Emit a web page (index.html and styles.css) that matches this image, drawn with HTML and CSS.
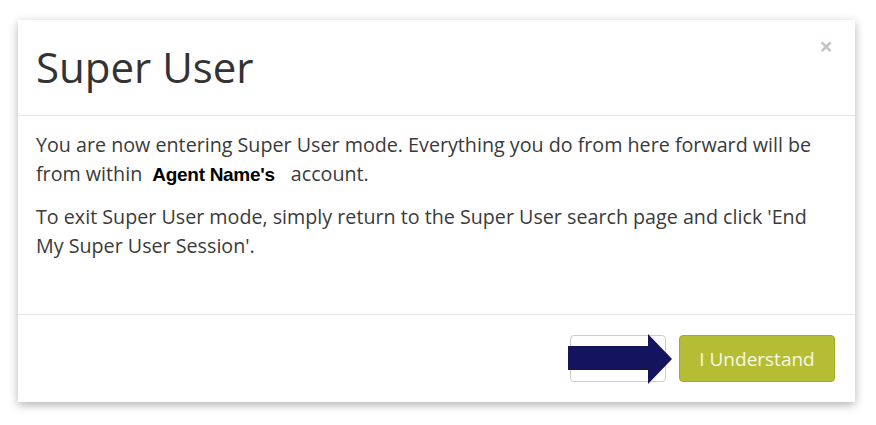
FILE: index.html
```html
<!DOCTYPE html>
<html>
<head>
<meta charset="utf-8">
<link rel="stylesheet" href="styles.css">
</head>
<body>
<div class="modal">
  <div class="modal-header">
    <h1 class="title">Super User</h1>
    <span class="close">&times;</span>
  </div>
  <div class="modal-body">
    <p>You are now entering Super User mode. Everything you do from here forward will be from within <span class="agent">Agent Name's</span> account.</p>
    <p>To exit Super User mode, simply return to the Super User search page and click 'End My Super User Session'.</p>
  </div>
  <div class="modal-footer">
    <div class="cancel-wrap">
      <button class="btn btn-default"></button>
      <svg class="arrow" width="104" height="50" viewBox="0 0 104 50"><polygon points="0,12 80,12 80,0 104,25 80,50 80,36 0,36" fill="#13135e"/></svg>
    </div>
    <button class="btn btn-primary">I Understand</button>
  </div>
</div>
</body>
</html>
```
FILE: styles.css
```css
html, body { margin: 0; padding: 0; background: #fff; }
body { padding: 20px 21px 23px 18px; font-family: "Open Sans", sans-serif; color: #333; }
.modal {
  width: 837px;
  height: 382px;
  background: #fff;
  box-shadow: 0 3px 9px rgba(0,0,0,0.3);
  display: flex;
  flex-direction: column;
}
.modal-header {
  height: 95px;
  border-bottom: 1px solid #e5e5e5;
  display: flex;
  justify-content: space-between;
  align-items: flex-start;
  padding: 0 22px 0 18px;
}
.title {
  margin: 19px 0 0;
  font-size: 42px;
  font-weight: 400;
  line-height: 56px;
  color: #333;
}
.close {
  margin-top: 14px;
  font-size: 24px;
  font-weight: 700;
  color: #c4c4c4;
  line-height: 24px;
}
.modal-body {
  flex: 1;
  padding: 14px 18px 0;
  font-size: 19.7px;
  line-height: 29px;
  color: #3a3a3a;
}
.modal-body p { margin: 0 0 13px; }
.agent {
  font-family: "Liberation Sans", sans-serif;
  font-weight: 700;
  color: #000;
  font-size: 19px;
  letter-spacing: -0.3px;
  margin: 0 11px 0 5px;
}
.modal-footer {
  height: 88px;
  border-top: 1px solid #e5e5e5;
  display: flex;
  justify-content: flex-end;
  align-items: center;
  gap: 13px;
  padding: 0 20px 0 0;
  box-sizing: border-box;
}
.btn {
  height: 47px;
  border-radius: 4px;
  font-family: "Open Sans", sans-serif;
  font-size: 19px;
  padding: 0;
}
.cancel-wrap { position: relative; width: 96px; height: 47px; }
.btn-default {
  width: 96px;
  background: #fff;
  border: 1px solid #ccc;
}
.arrow { position: absolute; left: -2px; top: -1px; }
.btn-primary {
  width: 156px;
  background: #b5bd34;
  border: 1px solid #a3aa2a;
  color: #f7f7e6;
}
```
